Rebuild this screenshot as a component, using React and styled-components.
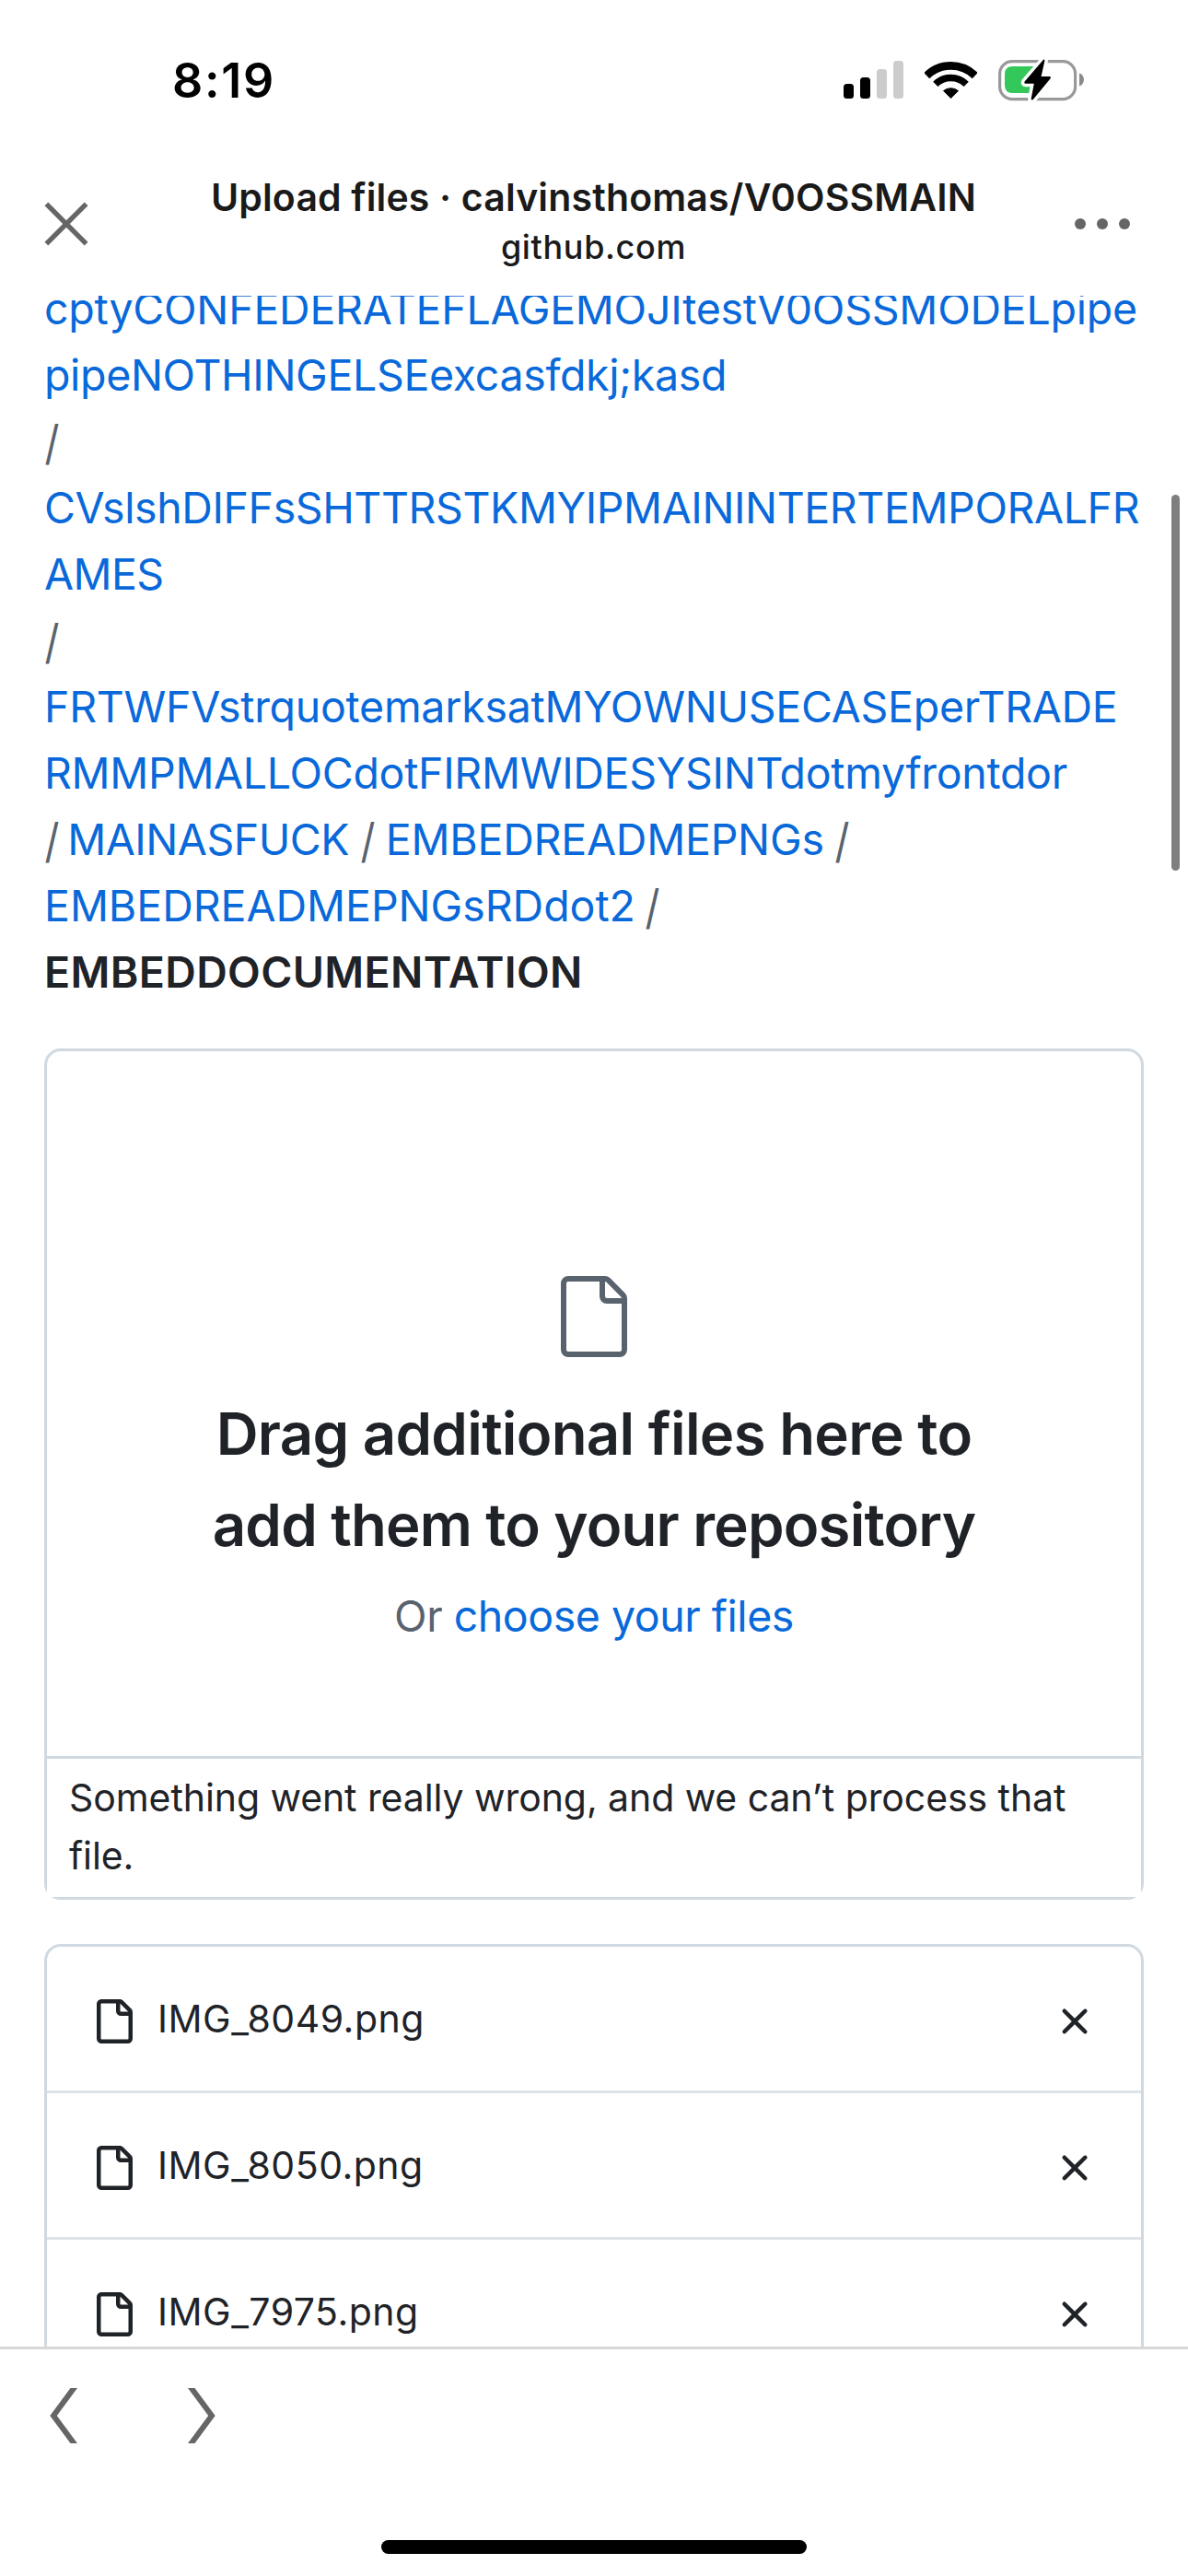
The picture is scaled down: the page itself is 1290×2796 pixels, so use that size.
import React from "react";
import styled, { createGlobalStyle } from "styled-components";

const GlobalStyle = createGlobalStyle`
  body {
    margin: 0;
    background: #fff;
    font-family: Inter, Roboto, "Liberation Sans", sans-serif;
    -webkit-font-smoothing: antialiased;
  }
`;

const Screen = styled.div`
  display: grid;
  grid-template-rows: 180px 141px 2226px 249px;
  width: 1290px;
  height: 2796px;
  overflow: hidden;
  background: #fff;
  color: #1f2328;
`;

const StatusBar = styled.div`
  display: flex;
  align-items: flex-start;
  justify-content: space-between;
  padding: 57px 112px 0 187px;
`;

const Clock = styled.div`
  font-size: 52px;
  font-weight: 600;
  line-height: 62px;
  letter-spacing: 1.7px;
  color: #000;
`;

const StatusIcons = styled.div`
  display: flex;
  gap: 23px;
  padding-top: 7px;

  svg {
    display: block;
  }
`;

const TitleBar = styled.header`
  display: flex;
  align-items: flex-start;
  justify-content: space-between;
  padding: 0 63px 0 48px;
`;

const IconButton = styled.button`
  display: block;
  flex: none;
  padding: 0;
  margin: ${(p) => p.$top || 0}px 0 0;
  border: 0;
  background: none;
  color: ${(p) => p.$color || "#666"};

  svg {
    display: block;
  }
`;

const PageInfo = styled.div`
  display: flex;
  flex-direction: column;
  align-items: center;
  gap: 2px;
  padding: 7px 0 0 26px;
  color: #1a1a1a;
  white-space: nowrap;
`;

const PageTitle = styled.div`
  font-size: 41px;
  font-weight: 600;
  line-height: 54px;
  letter-spacing: 0.16px;
`;

const PageDomain = styled.div`
  font-size: 36px;
  font-weight: 500;
  line-height: 50px;
  letter-spacing: 0.65px;
`;

const Viewport = styled.main`
  position: relative;
  overflow: hidden;
  padding: 0 48px;
`;

const ScrollThumb = styled.div`
  position: absolute;
  top: 216px;
  right: 9px;
  width: 9px;
  height: 408px;
  border-radius: 5px;
  background: #7f7f7f;
`;

const Breadcrumb = styled.nav`
  margin-top: -22px;
  font-size: 46.5px;
  line-height: 72px;
`;

const CrumbLine = styled.div`
  display: flex;
  gap: 11.5px;
  height: 72px;
  white-space: nowrap;
`;

const Crumb = styled.a`
  color: #0969da;
  letter-spacing: ${(p) => p.$tracking || 0}px;
  margin-left: ${(p) => p.$nudge || 0}px;
`;

const Slash = styled.span`
  color: #59636e;
  margin-left: ${(p) => p.$nudge || 0}px;
  transform: translateY(1.5px) scale(0.95, 1.1);
`;

const CurrentCrumb = styled.strong`
  font-weight: 600;
  letter-spacing: 0.34px;
`;

const UploadPanel = styled.section`
  margin-top: 47px;
  border: 3px solid #d1d9e0;
  border-radius: 18px;
`;

const DropZone = styled.div`
  display: flex;
  flex-direction: column;
  align-items: center;
  box-sizing: border-box;
  height: 765px;
  padding-top: 240px;
  color: #59636e;

  svg {
    display: block;
  }
`;

const DropHeading = styled.h2`
  margin: 29px 0 0;
  font-size: 63.5px;
  font-weight: 600;
  line-height: 99px;
  text-align: center;
  color: #1f2328;
`;

const HeadingLine = styled.span`
  display: block;
  letter-spacing: ${(p) => p.$tracking}px;
`;

const DropHint = styled.p`
  margin: 14px 0 0;
  font-size: 46.5px;
  line-height: 72px;
  letter-spacing: -0.5px;
`;

const ChooseLink = styled.a`
  color: #0969da;
  letter-spacing: -0.47px;
`;

const UploadError = styled.p`
  margin: 0;
  padding: 11px 24px 13px;
  border-top: 3px solid #d1d9e0;
  background: #fff;
  font-size: 41px;
  line-height: 63px;
  letter-spacing: -0.08px;
`;

const FileList = styled.ul`
  margin: 48px 0 0;
  padding: 0;
  border: 3px solid #d1d9e0;
  border-radius: 18px;
  list-style: none;
`;

const FileRow = styled.li`
  display: flex;
  align-items: center;
  height: 156px;
  padding: 0 48px;

  & + & {
    border-top: 3px solid #dde3e9;
  }

  svg {
    display: block;
    flex: none;
  }
`;

const FileGlyph = styled.span`
  padding-top: 6px;
`;

const FileName = styled.span`
  flex: 1;
  margin-left: 24px;
  font-size: 41px;
  line-height: 63px;
  letter-spacing: 0.5px;
`;

const Toolbar = styled.footer`
  display: flex;
  flex-direction: column;
  justify-content: space-between;
  align-items: center;
  box-sizing: border-box;
  border-top: 3px solid #d8d8d8;
  padding: 42px 54px 24px;
`;

const NavButtons = styled.div`
  display: flex;
  gap: 120px;
  align-self: stretch;
`;

const HomeIndicator = styled.div`
  width: 462px;
  height: 15px;
  border-radius: 8px;
  background: #000;
`;

const SignalIcon = () => (
  <svg width="65" height="46" viewBox="0 0 65 46">
    <rect x="0" y="27" width="11" height="16" rx="3.5" />
    <rect x="18" y="20" width="11" height="23" rx="3.5" />
    <rect x="36" y="11" width="11" height="32" rx="3.5" fill="#ccc" />
    <rect x="54" y="2" width="11" height="41" rx="3.5" fill="#ccc" />
  </svg>
);

const WifiIcon = () => (
  <svg width="57" height="46" viewBox="0 0 57 46">
    <g fill="none" stroke="#000">
      <path d="M2.2 18.1 A37.6 37.6 0 0 1 54.8 18.1" strokeWidth="8.6" />
      <path d="M11.8 27.3 A23.8 23.8 0 0 1 45.2 27.3" strokeWidth="7.4" />
    </g>
    <path
      d="M20.5 34.6 A12.6 12.6 0 0 1 36.5 34.6 L28.5 42.6 Z"
      stroke="#000"
      strokeWidth="1"
      strokeLinejoin="round"
    />
  </svg>
);

const BOLT =
  "M49 0.8 L28.6 24.6 Q27.6 26.6 29.6 26.7 L38.8 26.7 L35.6 43.4 Q36.6 45.6 38.2 43.6 L56.6 21.2 Q57.6 19.2 55.6 19 L46.6 19 L50.4 2 Q50.4 0 49 0.8 Z";

const BatteryIcon = () => (
  <svg width="94" height="46" viewBox="0 0 94 46">
    <rect x="1.6" y="2.6" width="82" height="41" rx="13.5" fill="none" stroke="#999" strokeWidth="3.2" />
    <path d="M88 15.5 C94.6 17.5 94.6 27.5 88 29.5 Z" fill="#8a8a8a" />
    <path d="M15.5 8 H43 V37 H15.5 Q7 37 7 28.5 V16.5 Q7 8 15.5 8 Z" fill="#34c759" />
    <path d={BOLT} fill="#fff" stroke="#fff" strokeWidth="7" strokeLinejoin="round" />
    <path d={BOLT} />
  </svg>
);

const CloseIcon = () => (
  <svg width="48" height="48" viewBox="0 0 48 48" stroke="currentColor" strokeWidth="5.4">
    <path d="M2.4 2.4 L45.6 45.6 M45.6 2.4 L2.4 45.6" />
  </svg>
);

const MoreIcon = () => (
  <svg width="60" height="12" viewBox="0 0 60 12" fill="currentColor">
    <circle cx="6" cy="6" r="6" />
    <circle cx="30" cy="6" r="6" />
    <circle cx="54" cy="6" r="6" />
  </svg>
);

const LargeFileIcon = () => (
  <svg width="96" height="96" viewBox="0 0 24 24" fill="currentColor" fillRule="evenodd">
    <path d="M3 3a2 2 0 0 1 2-2h9.982a2 2 0 0 1 1.414.586l4.018 4.018A2 2 0 0 1 21 7.018V21a2 2 0 0 1-2 2H5a2 2 0 0 1-2-2Zm2-.5a.5.5 0 0 0-.5.5v18a.5.5 0 0 0 .5.5h14a.5.5 0 0 0 .5-.5V8.5h-4a2 2 0 0 1-2-2v-4Zm10 0v4a.5.5 0 0 0 .5.5h4a.5.5 0 0 0-.146-.336l-4.018-4.018A.5.5 0 0 0 15 2.5Z" />
  </svg>
);

const FileIcon = () => (
  <svg width="48" height="48" viewBox="0 0 16 16" fill="currentColor">
    <path d="M2 1.75C2 .784 2.784 0 3.75 0h6.586c.464 0 .909.184 1.237.513l2.914 2.914c.329.328.513.773.513 1.237v9.586A1.75 1.75 0 0 1 13.25 16h-9.5A1.75 1.75 0 0 1 2 14.25Zm1.75-.25a.25.25 0 0 0-.25.25v12.5c0 .138.112.25.25.25h9.5a.25.25 0 0 0 .25-.25V6h-2.75A1.75 1.75 0 0 1 9 4.25V1.5Zm6.75.062V4.25c0 .138.112.25.25.25h2.688l-.011-.013-2.914-2.914-.013-.011Z" />
  </svg>
);

const RemoveIcon = () => (
  <svg width="48" height="48" viewBox="0 0 16 16" fill="currentColor">
    <path d="M3.72 3.72a.75.75 0 0 1 1.06 0L8 6.94l3.22-3.22a.749.749 0 0 1 1.275.326.749.749 0 0 1-.215.734L9.06 8l3.22 3.22a.749.749 0 0 1-.326 1.275.749.749 0 0 1-.734-.215L8 9.06l-3.22 3.22a.751.751 0 0 1-1.042-.018.751.751 0 0 1-.018-1.042L6.94 8 3.72 4.78a.75.75 0 0 1 0-1.06Z" />
  </svg>
);

const BackIcon = () => (
  <svg width="30" height="60" viewBox="0 0 30 60" fill="currentColor">
    <path d="M0.3 30 L22.5 0 H30 L7.8 30 L30 60 H22.5 Z" />
  </svg>
);

const ForwardIcon = () => (
  <svg width="30" height="60" viewBox="0 0 30 60" fill="currentColor">
    <path d="M29.7 30 L7.5 0 H0 L22.2 30 L0 60 H7.5 Z" />
  </svg>
);

const files = ["IMG_8049.png", "IMG_8050.png", "IMG_7975.png"];

export default function App() {
  return (
    <Screen>
      <GlobalStyle />
      <StatusBar>
        <Clock>8:19</Clock>
        <StatusIcons>
          <SignalIcon />
          <WifiIcon />
          <BatteryIcon />
        </StatusIcons>
      </StatusBar>

      <TitleBar>
        <IconButton $top={39} aria-label="Close">
          <CloseIcon />
        </IconButton>
        <PageInfo>
          <PageTitle>Upload files · calvinsthomas/V0OSSMAIN</PageTitle>
          <PageDomain>github.com</PageDomain>
        </PageInfo>
        <IconButton $top={57} aria-label="More">
          <MoreIcon />
        </IconButton>
      </TitleBar>

      <Viewport>
        <Breadcrumb>
          <CrumbLine>
            <Crumb $tracking={-0.24}>cptyCONFEDERATEFLAGEMOJItestV0OSSMODELpipe</Crumb>
          </CrumbLine>
          <CrumbLine>
            <Crumb $tracking={-0.35}>pipeNOTHINGELSEexcasfdkj;kasd</Crumb>
          </CrumbLine>
          <CrumbLine>
            <Slash>/</Slash>
          </CrumbLine>
          <CrumbLine>
            <Crumb $tracking={-0.41}>CVslshDIFFsSHTTRSTKMYIPMAININTERTEMPORALFR</Crumb>
          </CrumbLine>
          <CrumbLine>
            <Crumb $tracking={-0.6}>AMES</Crumb>
          </CrumbLine>
          <CrumbLine>
            <Slash>/</Slash>
          </CrumbLine>
          <CrumbLine>
            <Crumb $tracking={-0.28}>FRTWFVstrquotemarksatMYOWNUSECASEperTRADE</Crumb>
          </CrumbLine>
          <CrumbLine>
            <Crumb $tracking={-0.31}>RMMPMALLOCdotFIRMWIDESYSINTdotmyfrontdor</Crumb>
          </CrumbLine>
          <CrumbLine>
            <Slash>/</Slash>
            <Crumb $tracking={-0.5} $nudge={-3}>MAINASFUCK</Crumb>
            <Slash>/</Slash>
            <Crumb $tracking={-0.23}>EMBEDREADMEPNGs</Crumb>
            <Slash>/</Slash>
          </CrumbLine>
          <CrumbLine>
            <Crumb $tracking={-0.04}>EMBEDREADMEPNGsRDdot2</Crumb>
            <Slash $nudge={-1}>/</Slash>
          </CrumbLine>
          <CrumbLine>
            <CurrentCrumb>EMBEDDOCUMENTATION</CurrentCrumb>
          </CrumbLine>
        </Breadcrumb>

        <UploadPanel>
          <DropZone>
            <LargeFileIcon />
            <DropHeading>
              <HeadingLine $tracking={-0.72}>Drag additional files here to</HeadingLine>
              <HeadingLine $tracking={-0.81}>add them to your repository</HeadingLine>
            </DropHeading>
            <DropHint>
              Or <ChooseLink>choose your files</ChooseLink>
            </DropHint>
          </DropZone>
          <UploadError>Something went really wrong, and we can’t process that file.</UploadError>
        </UploadPanel>

        <FileList>
          {files.map((name) => (
            <FileRow key={name}>
              <FileGlyph>
                <FileIcon />
              </FileGlyph>
              <FileName>{name}</FileName>
              <IconButton $top={6} $color="#1f2328" aria-label={`Remove ${name}`}>
                <RemoveIcon />
              </IconButton>
            </FileRow>
          ))}
        </FileList>
        <ScrollThumb />
      </Viewport>

      <Toolbar>
        <NavButtons>
          <IconButton aria-label="Back">
            <BackIcon />
          </IconButton>
          <IconButton aria-label="Forward">
            <ForwardIcon />
          </IconButton>
        </NavButtons>
        <HomeIndicator />
      </Toolbar>
    </Screen>
  );
}
